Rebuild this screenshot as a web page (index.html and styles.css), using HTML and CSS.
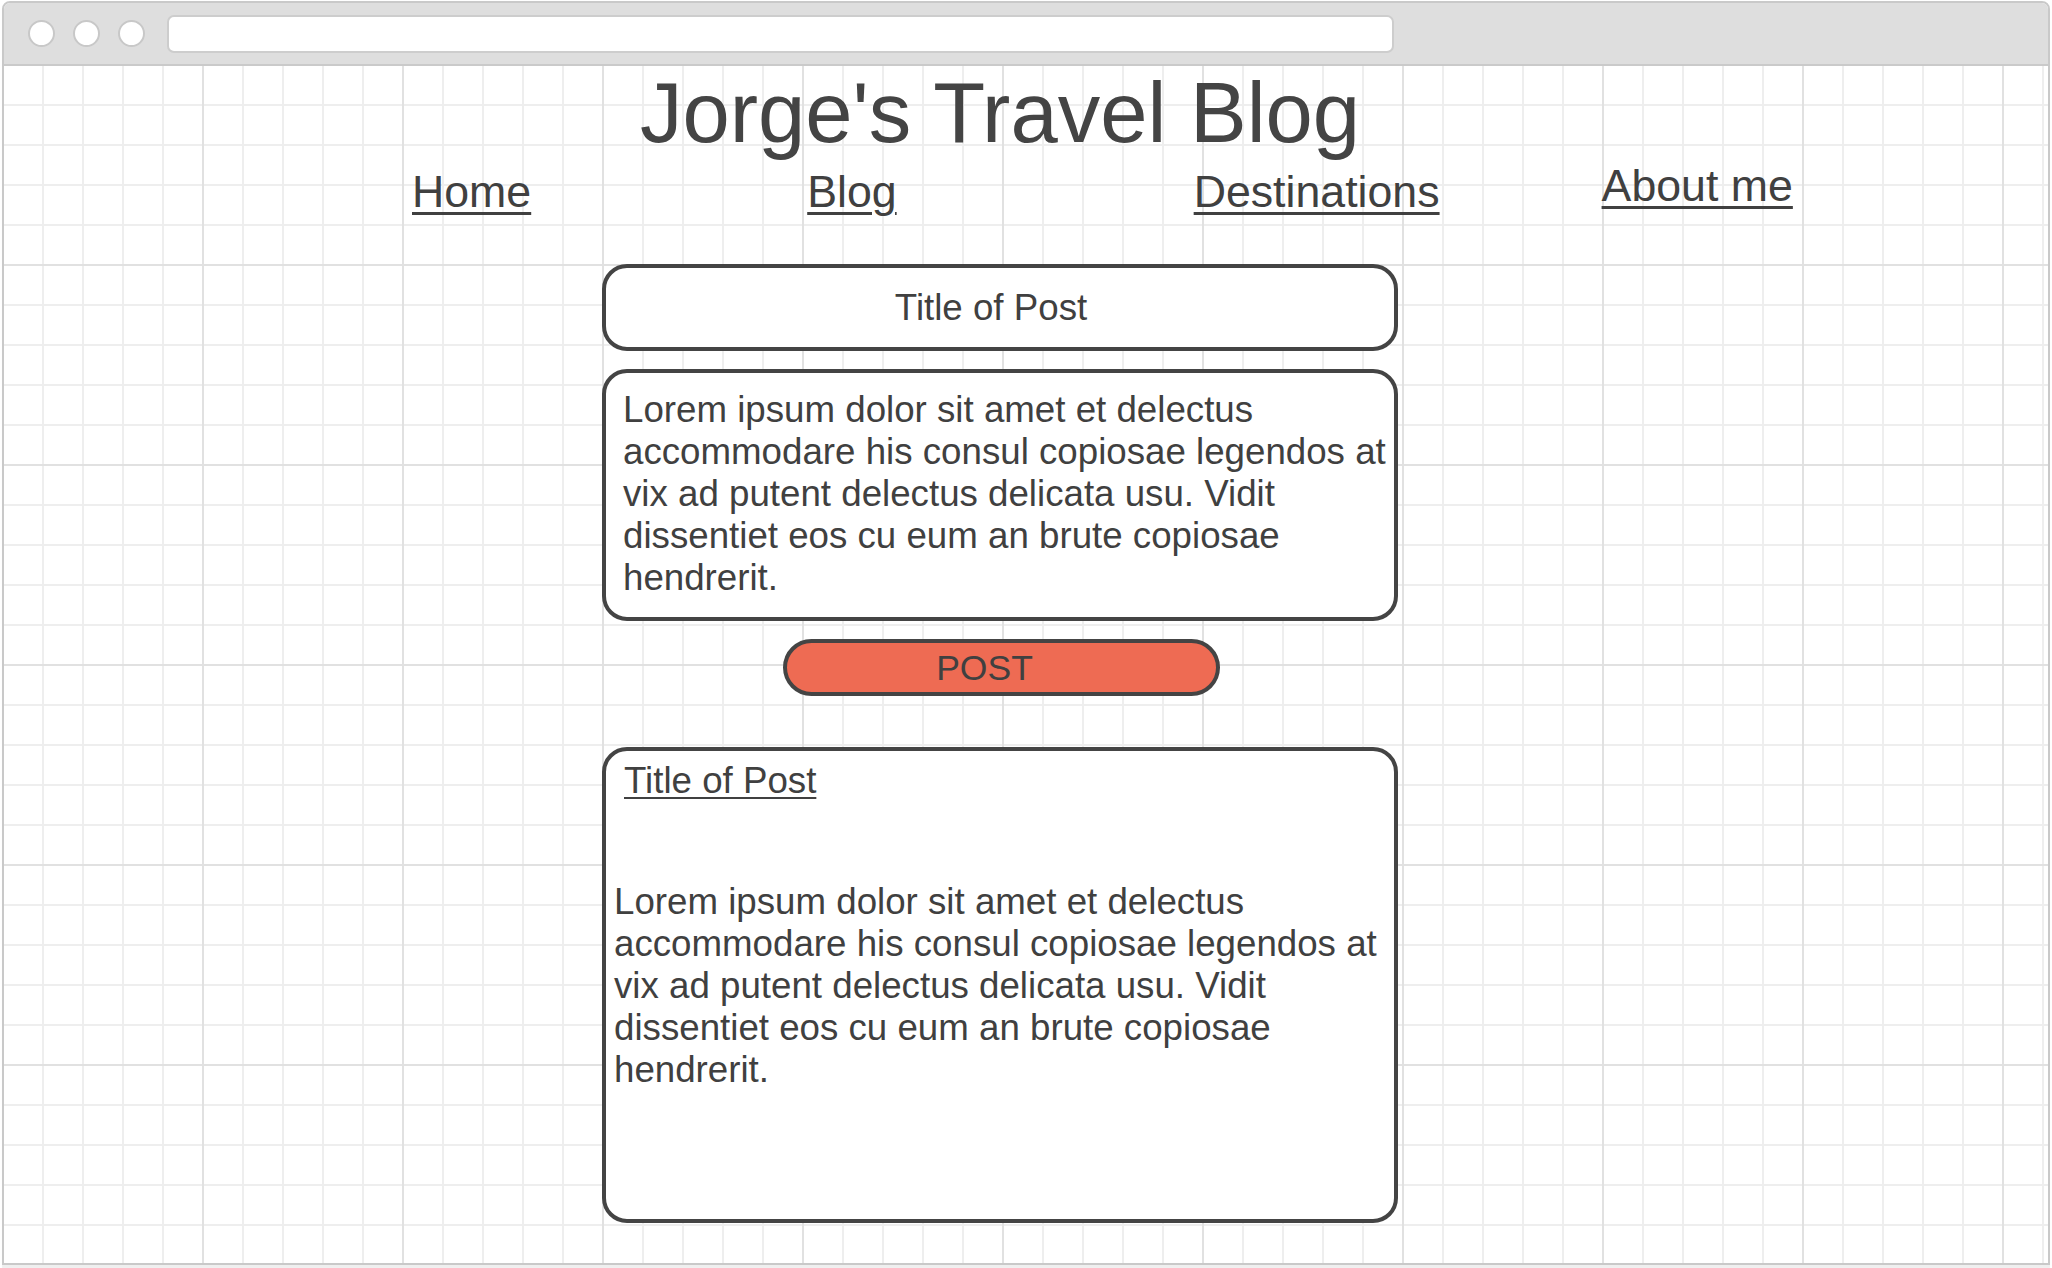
FILE: index.html
```html
<!DOCTYPE html>
<html lang="en">
<head>
<meta charset="utf-8">
<title>Jorge's Travel Blog</title>
<link rel="stylesheet" href="styles.css">
</head>
<body>
<div class="window">
  <div class="titlebar">
    <span class="dot"></span>
    <span class="dot"></span>
    <span class="dot"></span>
    <div class="address"></div>
  </div>
  <div class="canvas">
    <h1 class="blog-title">Jorge's Travel Blog</h1>
    <nav class="nav">
      <a class="nav-link nav-home" href="#">Home</a>
      <a class="nav-link nav-blog" href="#">Blog</a>
      <a class="nav-link nav-dest" href="#">Destinations</a>
      <a class="nav-link nav-about" href="#">About me</a>
    </nav>
    <main class="posts">
      <div class="title-box">Title of Post</div>
      <div class="body-box">Lorem ipsum dolor sit amet et delectus accommodare his consul copiosae legendos at vix ad putent delectus delicata usu. Vidit dissentiet eos cu eum an brute copiosae hendrerit.</div>
      <button class="post-btn" type="button">POST</button>
      <article class="post-card">
        <a class="post-card-title" href="#">Title of Post</a>
        <p class="post-card-text">Lorem ipsum dolor sit amet et delectus accommodare his consul copiosae legendos at vix ad putent delectus delicata usu. Vidit dissentiet eos cu eum an brute copiosae hendrerit.</p>
      </article>
    </main>
  </div>
</div>
</body>
</html>
```
FILE: styles.css
```css
html, body {
  margin: 0;
  padding: 0;
  background: #ffffff;
}

body {
  font-family: "Liberation Sans", Arial, Helvetica, sans-serif;
  color: #404040;
  width: 2052px;
  height: 1268px;
  overflow: hidden;
}

.window {
  box-sizing: border-box;
  margin: 1px 2px 0 2px;
  width: 2048px;
  height: 1264px;
  border: 2px solid #c9c9c9;
  border-radius: 8px 8px 0 0;
  display: flex;
  flex-direction: column;
  overflow: hidden;
  box-shadow: 0 3px 1px #efefef;
}

.titlebar {
  box-sizing: border-box;
  height: 63px;
  flex: 0 0 auto;
  background: #dedede;
  border-bottom: 2px solid #cacaca;
  display: flex;
  align-items: center;
  gap: 18px;
  padding-left: 24px;
}

.dot {
  box-sizing: border-box;
  width: 27px;
  height: 27px;
  border-radius: 50%;
  background: #ffffff;
  border: 2px solid #c8c8c8;
}

.address {
  box-sizing: border-box;
  margin-left: 4px;
  width: 1227px;
  height: 38px;
  background: #ffffff;
  border: 2px solid #cdcdcd;
  border-radius: 7px;
}

.canvas {
  flex: 1 1 auto;
  background-color: #ffffff;
  background-image:
    linear-gradient(to right, #e1e1e1 2px, transparent 2px),
    linear-gradient(to bottom, #e1e1e1 2px, transparent 2px),
    linear-gradient(to right, #eeeeee 2px, transparent 2px),
    linear-gradient(to bottom, #eeeeee 2px, transparent 2px);
  background-size: 200px 200px, 200px 200px, 40px 40px, 40px 40px;
  background-position: 198px 198px, 198px 198px, 38px 38px, 38px 38px;
}

.blog-title {
  margin: 0 0 0 599px;
  width: 794px;
  text-align: center;
  white-space: nowrap;
  font-size: 85px;
  line-height: 94px;
  font-weight: normal;
  color: #444444;
}

.nav {
  display: flex;
  align-items: flex-start;
  padding-left: 408px;
}

.nav-link {
  font-size: 44.7px;
  line-height: 52px;
  color: #404040;
  text-decoration: underline;
  text-decoration-thickness: 3px;
  text-underline-offset: 5px;
  margin-top: 6px;
  white-space: nowrap;
}

.nav-blog {
  margin-left: 276px;
}

.nav-dest {
  margin-left: 297px;
}

.nav-about {
  margin-left: 162px;
  margin-top: 0;
}

.posts {
  width: 796px;
  margin: 46px 0 0 598px;
  display: flex;
  flex-direction: column;
  font-size: 36.7px;
  line-height: 42px;
}

.title-box {
  box-sizing: border-box;
  height: 87px;
  border: 4px solid #444444;
  border-radius: 25px;
  background: #ffffff;
  display: flex;
  align-items: center;
  justify-content: center;
  padding-right: 18px;
}

.body-box {
  box-sizing: border-box;
  margin-top: 18px;
  height: 252px;
  border: 4px solid #444444;
  border-radius: 25px;
  background: #ffffff;
  padding: 16px 4px 0 17px;
}

.post-btn {
  box-sizing: border-box;
  margin: 18px 0 0 181px;
  align-self: flex-start;
  width: 437px;
  height: 57px;
  background: #ee6b53;
  border: 4px solid #444444;
  border-radius: 29px;
  font-family: "Liberation Sans", Arial, Helvetica, sans-serif;
  font-size: 35.5px;
  line-height: 42px;
  color: #404040;
  padding: 0 34px 0 0;
  display: flex;
  align-items: center;
  justify-content: center;
}

.post-card {
  box-sizing: border-box;
  margin-top: 51px;
  height: 476px;
  border: 4px solid #444444;
  border-radius: 25px;
  background: #ffffff;
  padding: 9px 4px 0 8px;
  display: flex;
  flex-direction: column;
  align-items: flex-start;
}

.post-card-title {
  margin-left: 10px;
  color: #404040;
  text-decoration: underline;
  text-decoration-thickness: 2px;
  text-underline-offset: 4px;
}

.post-card-text {
  margin: 79px 0 0 0;
}
```
